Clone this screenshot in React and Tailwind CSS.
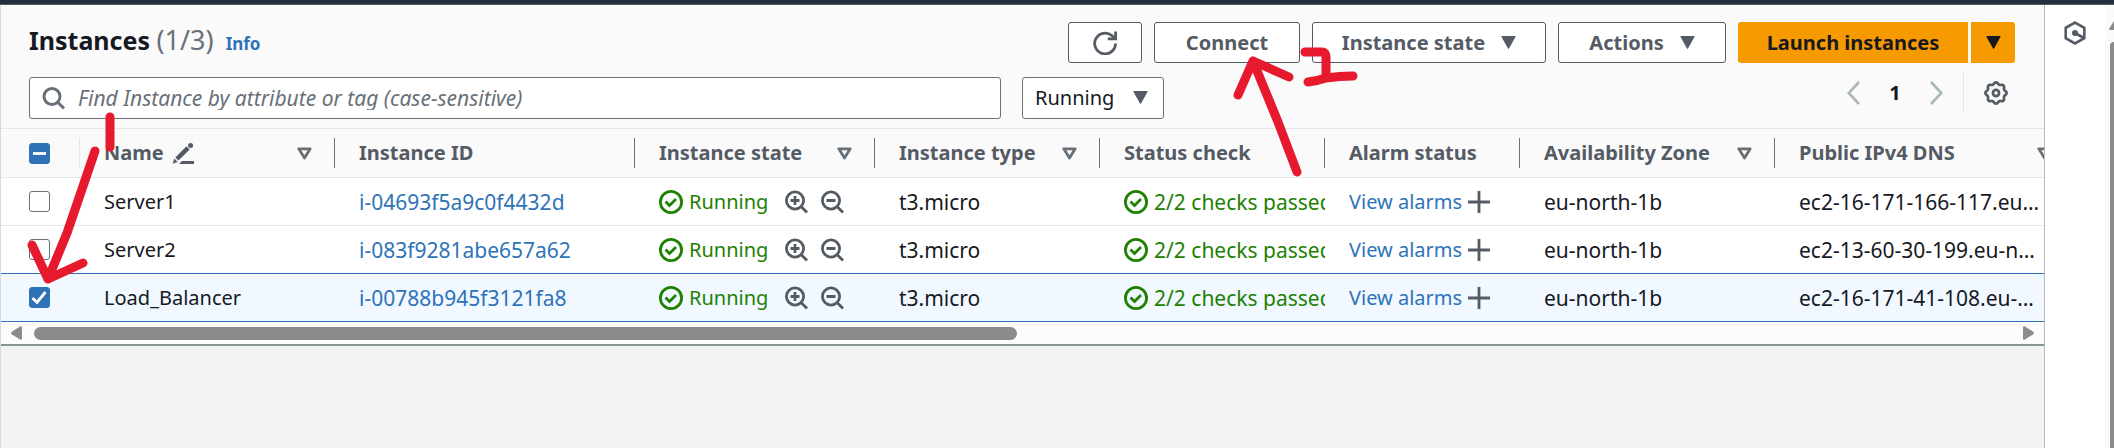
import React from "react";

const Caret = () => (
  <svg className="h-[13px] w-[15px] shrink-0" viewBox="0 0 15 13" aria-hidden="true">
    <path d="M0.8 0.5h13.4L7.5 12.5z" fill="currentColor" stroke="currentColor" strokeLinejoin="round" />
  </svg>
);

const FilterCaret = () => (
  <svg className="h-[13px] w-[15px] shrink-0 text-[#687078]" viewBox="0 0 15 13" aria-hidden="true">
    <path d="M1.8 1.8h11.4L7.5 11z" fill="none" stroke="currentColor" strokeWidth="2.8" strokeLinejoin="round" />
  </svg>
);

const Search = () => (
  <svg className="size-6 shrink-0 text-[#687078]" viewBox="0 0 24 24" fill="none" stroke="currentColor" strokeWidth="3" aria-hidden="true">
    <circle cx="10" cy="10.5" r="8" />
    <path d="M15.500 16l6.500 6.500" />
  </svg>
);

const Zoom = ({ plus }) => (
  <svg className="size-6 shrink-0" viewBox="0 0 24 24" fill="none" stroke="currentColor" strokeWidth="2.8" aria-hidden="true">
    <circle cx="11" cy="10.500" r="8.600" />
    <path d="M17 16.500l6 6M6.500 10.500h9" />
    {plus && <path d="M11 6v9" />}
  </svg>
);

const Check = () => (
  <svg className="size-6 shrink-0" viewBox="0 0 24 24" fill="none" stroke="currentColor" strokeWidth="2.8" aria-hidden="true">
    <circle cx="12" cy="12" r="10.6" />
    <path d="M6.5 11.5l4 4 6.5-6.5" />
  </svg>
);

const Plus = () => (
  <svg className="size-[22px] shrink-0" viewBox="0 0 22 22" stroke="currentColor" strokeWidth="2.8" aria-hidden="true">
    <path d="M11 0v22M0 11h22" />
  </svg>
);

const Pencil = () => (
  <svg className="h-[21px] w-[22px] shrink-0" viewBox="0 0 22 21" fill="currentColor" aria-hidden="true">
    <path d="M14.5 3.2l3.2 3.2L6.5 17.6 3.3 14.4zM2.4 15.6l3.3 3.3L0.5 20.8z" />
    <circle cx="18.6" cy="2.6" r="2.5" />
    <path d="M10 18h12v3H7z" />
  </svg>
);

const Refresh = () => (
  <svg className="size-6" viewBox="0 0 24 24" fill="none" stroke="currentColor" strokeWidth="2.8" aria-hidden="true">
    <path d="M22.5 12.5A10.4 10.4 0 1 1 18.9 4.6L22 7.5" />
    <path d="M22.6 0.5v7.3h-7.8" />
  </svg>
);

const gearPoints = Array.from({ length: 96 }, (_, i) => {
  const a = (i / 96) * Math.PI * 2;
  const r = 9.7 + 0.9 * Math.cos(8 * a);
  return `${(12 + r * Math.cos(a)).toFixed(2)},${(12 + r * Math.sin(a)).toFixed(2)}`;
}).join(" ");

const Gear = () => (
  <svg className="size-6" viewBox="0 0 24 24" fill="none" stroke="currentColor" strokeWidth="2.7" aria-hidden="true">
    <polygon points={gearPoints} />
    <circle cx="12" cy="12" r="3.100" />
  </svg>
);

const Hexagon = () => (
  <svg className="size-6" viewBox="0 0 24 24" fill="none" stroke="currentColor" strokeWidth="2.6" aria-hidden="true">
    <path d="M12 1.6l9.3 5.2v10.4L12 22.4l-9.3-5.2V6.8z" />
    <path d="M12 12l8 4.5" />
    <circle cx="12" cy="12" r="3" fill="currentColor" stroke="none" />
  </svg>
);

const Chevron = ({ flip }) => (
  <svg className="h-6 w-[13px]" viewBox="0 0 13 24" fill="none" stroke="currentColor" strokeWidth="2.6" aria-hidden="true">
    <path d={flip ? "M1 1l10.3 11L1 23" : "M12 1L1.7 12 12 23"} />
  </svg>
);

const btn =
  "flex h-[41px] items-center justify-center rounded-[3px] border border-[#545b64] bg-white font-bold text-[#545b64]";

const columns = [
  { label: "Name", width: "w-[255px]", edit: true, filter: true },
  { label: "Instance ID", width: "w-[300px]" },
  { label: "Instance state", width: "w-[240px]", filter: true },
  { label: "Instance type", width: "w-[225px]", filter: true },
  { label: "Status check", width: "w-[225px]" },
  { label: "Alarm status", width: "w-[195px]" },
  { label: "Availability Zone", width: "w-[255px]", filter: true },
  { label: "Public IPv4 DNS", width: "w-[300px]", filter: true },
];

const rows = [
  { name: "Server1", id: "i-04693f5a9c0f4432d", dns: "ec2-16-171-166-117.eu…" },
  { name: "Server2", id: "i-083f9281abe657a62", dns: "ec2-13-60-30-199.eu-n…" },
  { name: "Load_Balancer", id: "i-00788b945f3121fa8", dns: "ec2-16-171-41-108.eu-…", selected: true },
];

function Box({ label, checked, mixed }) {
  return (
    <label className="relative ml-7 block size-[21px]">
      <input
        type="checkbox"
        aria-label={label}
        defaultChecked={checked}
        className={
          "block size-[21px] appearance-none rounded-[3px] border " +
          (checked || mixed ? "border-[#2e73b8] bg-[#2e73b8]" : "border-[#687078] bg-white")
        }
      />
      {(checked || mixed) && (
        <svg className="pointer-events-none absolute inset-0 size-[21px]" viewBox="0 0 21 21" fill="none" stroke="#fff" strokeWidth="2.8" aria-hidden="true">
          <path d={mixed ? "M4 10.5h13" : "M3.5 11l4.5 4.5L16.5 5"} />
        </svg>
      )}
    </label>
  );
}

function Row({ row }) {
  const td = "p-0 pl-6";
  return (
    <tr className={row.selected ? "h-12 border-y border-[#2e73b8] bg-[#f1f8ff]" : "h-12 border-t border-[#e4e7e7] bg-white"}>
      <td className="p-0">
        <Box label={"Select " + row.name} checked={row.selected} />
      </td>
      <td className={td + " text-xl leading-6"}>{row.name}</td>
      <td className={td}>
        <a href="#instance" className="text-[#2e73b8]">{row.id}</a>
      </td>
      <td className={td}>
        <div className="flex items-center text-xl leading-6">
          <span className="flex items-center gap-[6px] text-[#1d8102]">
            <Check />
            Running
          </span>
          <span className="ml-4 flex gap-3 text-[#545b64]">
            <button type="button" aria-label="Include state" className="flex"><Zoom plus /></button>
            <button type="button" aria-label="Exclude state" className="flex"><Zoom /></button>
          </span>
        </div>
      </td>
      <td className={td}>t3.micro</td>
      <td className={td}>
        <div className="flex items-center gap-[6px] overflow-hidden whitespace-nowrap text-[#1d8102]">
          <Check />
          2/2 checks passed
        </div>
      </td>
      <td className={td}>
        <div className="flex items-center gap-[6px] whitespace-nowrap text-xl leading-6">
          <a href="#alarms" className="text-[#2e73b8]">View alarms</a>
          <button type="button" aria-label="Add alarm" className="flex text-[#545b64]"><Plus /></button>
        </div>
      </td>
      <td className={td}>eu-north-1b</td>
      <td className={td + " whitespace-nowrap"}>{row.dns}</td>
    </tr>
  );
}

export default function App() {
  return (
    <div className="relative flex h-screen flex-col overflow-hidden bg-[#f2f3f3] font-['Noto_Sans','Open_Sans',sans-serif] text-xl leading-6 text-[#16191f]">
      <div className="h-[5px] shrink-0 border-b border-[#545b64] bg-[#232f3e]" />
      <div className="flex min-h-0 flex-1">
        <main className="min-w-0 flex-1 border-x border-l-[#d5dbdb] border-r-[#b4bcc0]">
          <section className="border-b-2 border-[#879596] bg-[#fafafa]">
            <header className="pt-[17px] pr-[29px] pl-7">
              <div className="flex items-start justify-between">
                <div className="flex items-baseline">
                  <h1 className="text-[25px] leading-9 font-bold">
                    Instances <span className="text-[27px] font-normal text-[#687078]">(1/3)</span>
                  </h1>
                  <a href="#info" className="ml-3 text-[17px] font-bold text-[#2e73b8]">Info</a>
                </div>
                <div className="flex gap-3">
                  <button type="button" aria-label="Refresh" className={btn + " w-[74px]"}><Refresh /></button>
                  <button type="button" className={btn + " w-[146px]"}>Connect</button>
                  <button type="button" className={btn + " w-[234px] gap-4"}>Instance state <Caret /></button>
                  <button type="button" className={btn + " w-[168px] gap-4"}>Actions <Caret /></button>
                  <div className="flex gap-[3px] font-bold">
                    <button type="button" className="h-[41px] w-[230px] rounded-l-[3px] bg-[#f79a00]">Launch instances</button>
                    <button type="button" aria-label="Launch options" className="flex h-[41px] w-11 items-center justify-center rounded-r-[3px] bg-[#f79a00]"><Caret /></button>
                  </div>
                </div>
              </div>
              <div className="mt-[14px] flex items-start justify-between pb-[9px]">
                <div className="flex w-[1135px] gap-[21px]">
                  <label className="flex h-[42px] flex-1 items-center gap-3 rounded-[3px] border border-[#687078] bg-white pl-3">
                    <Search />
                    <input
                      type="text"
                      aria-label="Find Instance"
                      placeholder="Find Instance by attribute or tag (case-sensitive)"
                      className="min-w-0 flex-1 bg-transparent text-[21px] italic outline-none placeholder:text-[#687078]"
                    />
                  </label>
                  <label className="relative flex">
                    <select aria-label="Instance state filter" className="h-[42px] w-[142px] appearance-none rounded-[3px] border border-[#687078] bg-white pl-3">
                      <option>Running</option>
                    </select>
                    <span className="pointer-events-none absolute top-[14px] right-4 text-[#545b64]"><Caret /></span>
                  </label>
                </div>
                <div className="-mt-[5px] flex items-center">
                  <button type="button" aria-label="Previous page" className="text-[#aab7b8]"><Chevron /></button>
                  <span className="w-[70px] text-center font-bold">1</span>
                  <button type="button" aria-label="Next page" className="text-[#aab7b8]"><Chevron flip /></button>
                  <span className="ml-5 flex h-[41px] items-center border-l border-[#e4e7e7] pr-[7px] pl-5">
                    <button type="button" aria-label="Preferences" className="text-[#545b64]"><Gear /></button>
                  </span>
                </div>
              </div>
            </header>
            <div className="overflow-hidden">
              <table className="w-[2074px] table-fixed border-collapse text-left text-[21px] leading-6">
                <thead className="text-xl leading-6">
                  <tr className="h-[49px] border-t border-[#e4e7e7]">
                    <th className="w-[79px] p-0">
                      <div className="flex h-[30px] items-center border-r border-[#e4e7e7]">
                        <Box label="Select all" mixed />
                      </div>
                    </th>
                    {columns.map((c) => (
                      <th key={c.label} className={"p-0 font-bold text-[#545b64] " + c.width}>
                        <div className="flex h-[30px] items-center justify-between border-r border-[#687078] pr-[22px] pl-6">
                          <span className="flex items-center gap-2 whitespace-nowrap">
                            {c.label}
                            {c.edit && <Pencil />}
                          </span>
                          {c.filter && <FilterCaret />}
                        </div>
                      </th>
                    ))}
                  </tr>
                </thead>
                <tbody>
                  {rows.map((r) => (
                    <Row key={r.id} row={r} />
                  ))}
                </tbody>
              </table>
            </div>
            <div className="flex h-[22px] items-center bg-[#fcfcfc] px-[10px] text-[#8b8b8b]">
              <svg className="h-[14px] w-[11px]" viewBox="0 0 11 14" fill="currentColor" aria-hidden="true">
                <path d="M11 1.5v11q0 1.5-1.500 1.2L1 8.500Q-0.500 7 1 5.500L9.500 0.300Q11 0 11 1.500z" />
              </svg>
              <div className="mx-3 flex-1">
                <div className="h-[13px] w-[calc(50%-6px)] rounded-full bg-[#8b8b8b]" />
              </div>
              <svg className="h-[14px] w-[11px]" viewBox="0 0 11 14" fill="currentColor" aria-hidden="true">
                <path d="M0 1.5v11q0 1.500 1.500 1.200L10 8.500Q11.500 7 10 5.500L1.500 0.300Q0 0 0 1.500z" />
              </svg>
            </div>
          </section>
        </main>
        <aside className="flex w-[60px] shrink-0 justify-center bg-white pt-4">
          <button type="button" aria-label="Open panel" className="h-6 text-[#545b64]"><Hexagon /></button>
        </aside>
        <div className="flex w-[9px] shrink-0 flex-col items-end bg-[#fafafa] pt-4 text-[#8b8b8b]">
          <svg className="h-[9px] w-[5px]" viewBox="0 0 5 9" fill="currentColor" aria-hidden="true">
            <path d="M5 0v9H1Q-0.500 8.500 0.500 7z" />
          </svg>
          <div className="mt-3 w-1 flex-1 rounded-tl-full bg-[#8b8b8b]" />
        </div>
      </div>
      <svg className="pointer-events-none absolute top-0 left-0 h-[448px] w-[1400px]" viewBox="0 0 1400 448" fill="none" stroke="#e6192d" strokeWidth="9" strokeLinecap="round" strokeLinejoin="round" aria-hidden="true">
        <path d="M110 117v30M95 151L67 233L48 279M32 245L48 279L83 263" />
        <path d="M1297 172L1278 122L1253 61M1238 95L1253 61L1289 77" />
        <path d="M1305 52h17q4 0 4 5v20M1308 82q9-1 18-4q14-2 27-2" />
      </svg>
    </div>
  );
}
